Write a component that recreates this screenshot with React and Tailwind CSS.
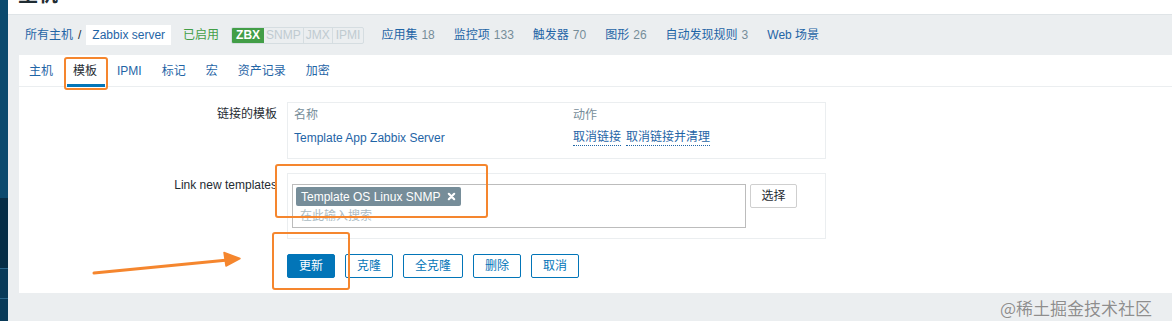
export default function App() {
  const tabs = ["主机", "模板", "IPMI", "标记", "宏", "资产记录", "加密"];
  const nav = [
    ["应用集", "18"],
    ["监控项", "133"],
    ["触发器", "70"],
    ["图形", "26"],
    ["自动发现规则", "3"],
    ["Web 场景", ""],
  ];
  return (
    <div className="relative w-[1172px] h-[321px] overflow-hidden bg-[#ebeef0] flex font-['Liberation_Sans','Noto_Sans_CJK_SC',sans-serif] text-[12px] text-[#1f2c33]">
      <aside className="w-[8px] shrink-0 flex flex-col">
        <div className="h-[198px] bg-[#0b4a6e]" />
        <div className="h-[70px] bg-[#062d45]" />
        <div className="h-px bg-[#2b6589]" />
        <div className="h-[29px] bg-[#093a58]" />
        <div className="h-px bg-[#2b6589]" />
        <div className="flex-1 bg-[#093a58]" />
      </aside>
      <main className="flex-1 flex flex-col">
        <header className="h-[15px] shrink-0 bg-white overflow-hidden pl-[10px] border-b border-[#dfe4e7]">
          <h1 className="text-[20px] font-bold leading-[20px] -mt-[15px] text-[#1f2c33]">主机</h1>
        </header>
        <nav className="h-[40px] shrink-0 flex items-center pl-[17px] leading-[16px]">
          <a className="text-[#1f65a6]">所有主机</a>
          <span className="mx-[5px] text-[#1f2c33]">/</span>
          <span className="bg-white h-[20px] px-[6px] flex items-center text-[#1f65a6]">Zabbix server</span>
          <span className="ml-[12px] text-[#429e47]">已启用</span>
          <span className="ml-[12px] flex h-[17px] border border-[#d5dde1] rounded-[2px] overflow-hidden leading-[15px]">
            <span className="bg-[#429e47] text-white px-[4px] font-bold">ZBX</span>
            <span className="text-[#c0cbd0] px-[2px] border-r border-[#d5dde1]">SNMP</span>
            <span className="text-[#c0cbd0] px-[2px] border-r border-[#d5dde1]">JMX</span>
            <span className="text-[#c0cbd0] px-[3px]">IPMI</span>
          </span>
          <span className="ml-[17px] flex gap-[19px]">
            {nav.map(([t, n]) => (
              <span key={t} className="flex gap-[4px]">
                <a className="text-[#1f65a6]">{t}</a>
                {n && <span className="text-[#768d99]">{n}</span>}
              </span>
            ))}
          </span>
        </nav>
        <section className="ml-[11px] h-[238px] shrink-0 bg-white flex flex-col">
          <ul className="h-[32px] flex border-b border-[#ebeef0] leading-[16px]">
            {tabs.map((t) => (
              <li key={t} className={"relative px-[10px] flex items-center " + (t === "模板" ? "text-[#1f2c33]" : "text-[#1f65a6]")}>
                {t}
                {t === "模板" && <span className="absolute bottom-[-1px] left-[4px] right-[2px] h-[3px] bg-[#0275b8]" />}
              </li>
            ))}
          </ul>
          <div className="pt-[15px] flex flex-col leading-[16px]">
            <div className="flex">
              <div className="w-[258px] text-right pt-[4px]">链接的模板</div>
              <div className="ml-[10px] w-[539px] h-[57px] border border-[#ebeef0] px-[6px] pt-[4px]">
                <div className="flex text-[#768d99]">
                  <span className="w-[279px]">名称</span>
                  <span>动作</span>
                </div>
                <div className="flex mt-[7px]">
                  <a className="w-[279px] text-[#1f65a6]">Template App Zabbix Server</a>
                  <a className="text-[#1f65a6] border-b border-dotted border-[#1f65a6] leading-[15px]">取消链接</a>
                  <a className="ml-[5px] text-[#1f65a6] border-b border-dotted border-[#1f65a6] leading-[15px]">取消链接并清理</a>
                </div>
              </div>
            </div>
            <div className="flex mt-[14px]">
              <div className="w-[258px] text-right pt-[4px]">Link new templates</div>
              <div className="ml-[10px] w-[539px] h-[66px] border border-[#ebeef0] pl-[4px] pt-[10px] flex items-start">
                <div className="w-[454px] h-[44px] border border-[#bcbcbc] pl-[3px] pt-[2px] flex flex-col items-start">
                  <span className="h-[19px] bg-[#768d99] text-white rounded-[2px] pl-[5px] pr-[5px] flex items-center gap-[7px]">
                    Template OS Linux SNMP
                    <svg width="9" height="9" viewBox="0 0 10 10">
                      <path d="M2 2 L8 8 M8 2 L2 8" stroke="white" strokeWidth="2.4" strokeLinecap="round" />
                    </svg>
                  </span>
                  <span className="mt-[2px] ml-[4px] text-[#acbbc2]">在此输入搜索</span>
                </div>
                <button className="ml-[4px] w-[47px] h-[24px] border border-[#cfcfcf] rounded-[2px] bg-white text-[#1f2c33] leading-[16px]">选择</button>
              </div>
            </div>
            <div className="flex mt-[15px] ml-[268px] gap-[10px]">
              <button className="w-[48px] h-[24px] rounded-[2px] bg-[#0275b8] border border-[#0275b8] text-white">更新</button>
              <button className="w-[48px] h-[24px] rounded-[2px] bg-white border border-[#0275b8] text-[#0275b8]">克隆</button>
              <button className="w-[60px] h-[24px] rounded-[2px] bg-white border border-[#0275b8] text-[#0275b8]">全克隆</button>
              <button className="w-[48px] h-[24px] rounded-[2px] bg-white border border-[#0275b8] text-[#0275b8]">删除</button>
              <button className="w-[48px] h-[24px] rounded-[2px] bg-white border border-[#0275b8] text-[#0275b8]">取消</button>
            </div>
          </div>
        </section>
      </main>

      <div className="absolute left-[64px] top-[57px] w-[44px] h-[33px] border-2 border-[#f5862e] rounded-[3px]" />
      <div className="absolute left-[275px] top-[164px] w-[213px] h-[54px] border-2 border-[#f5862e] rounded-[3px]" />
      <div className="absolute left-[272px] top-[232px] w-[78px] h-[58px] border-2 border-[#f5862e] rounded-[3px]" />
      <svg className="absolute left-0 top-0" width="300" height="300" viewBox="0 0 300 300">
        <path d="M94 273 L228 260" stroke="#f5862e" strokeWidth="3" strokeLinecap="round" />
        <path d="M240 258.5 L224 252.5 L226 266 Z" fill="#f5862e" stroke="#f5862e" strokeWidth="1.5" strokeLinejoin="round" />
      </svg>
      <div className="absolute left-[1000px] top-[297px] text-[17px] leading-[22px] text-[#8e8e8e] font-['Noto_Sans_CJK_SC',sans-serif] [text-shadow:0_0_1px_#fff]">@稀土掘金技术社区</div>
    </div>
  );
}
